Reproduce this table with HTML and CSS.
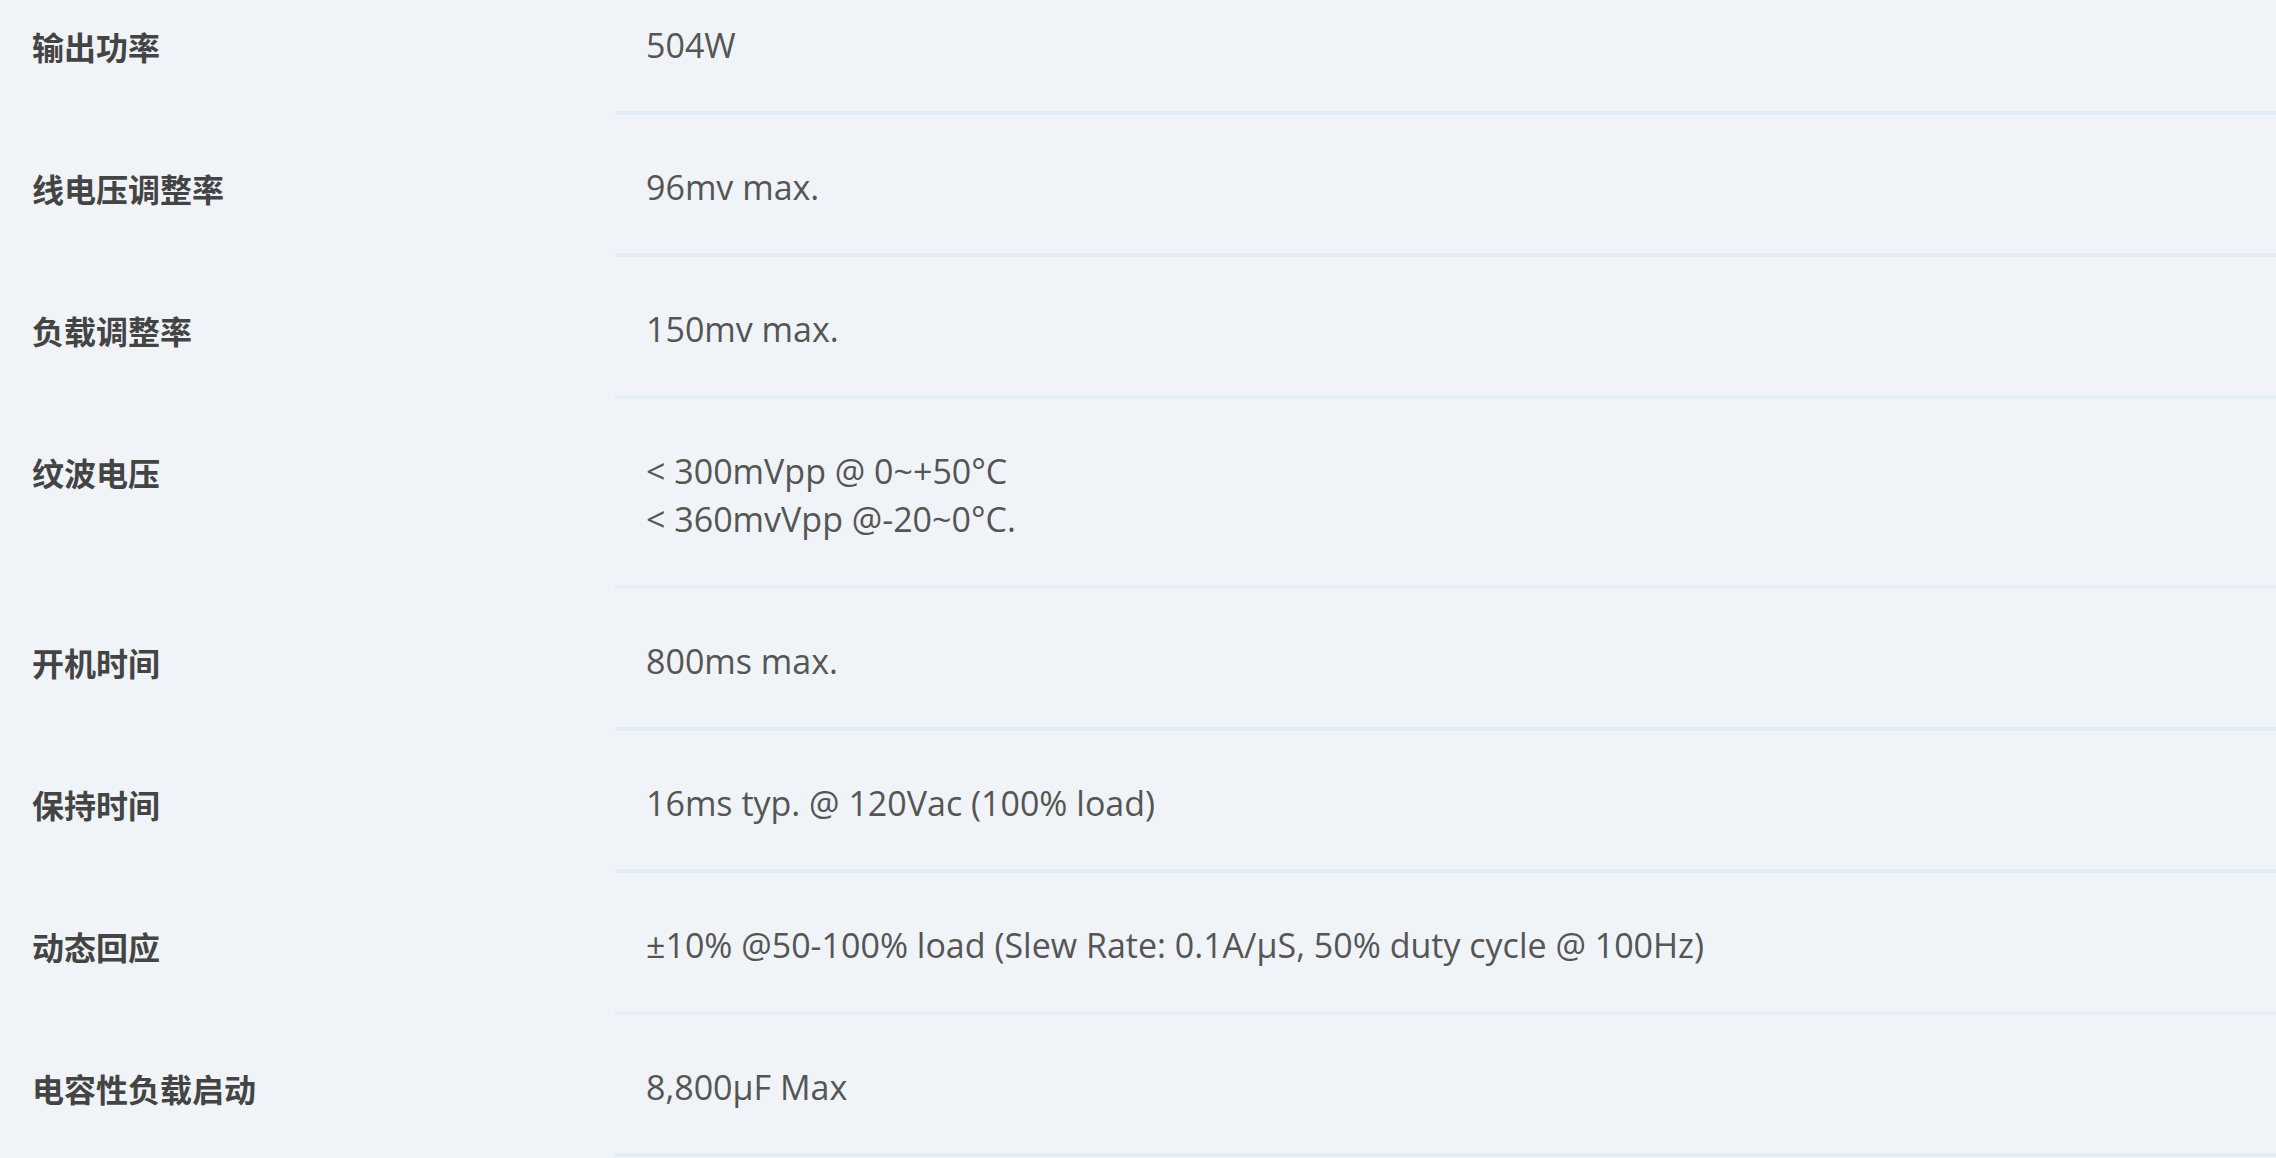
FILE: index.html
```html
<!DOCTYPE html>
<html lang="zh-CN">
<head>
    <meta charset="UTF-8">
    <meta name="viewport" content="width=device-width, initial-scale=1.0">
    <title>规格参数</title>
    <link rel="stylesheet" href="styles.css">
</head>
<body>
    <dl class="spec-list">
        <dt>输出功率</dt>
        <dd>504W</dd>

        <dt>线电压调整率</dt>
        <dd>96mv max.</dd>

        <dt>负载调整率</dt>
        <dd>150mv max.</dd>

        <dt>纹波电压</dt>
        <dd>&lt; 300mVpp @ 0~+50°C<br>&lt; 360mvVpp @-20~0°C.</dd>

        <dt>开机时间</dt>
        <dd>800ms max.</dd>

        <dt>保持时间</dt>
        <dd>16ms typ. @ 120Vac (100% load)</dd>

        <dt>动态回应</dt>
        <dd>±10% @50-100% load (Slew Rate: 0.1A/μS, 50% duty cycle @ 100Hz)</dd>

        <dt>电容性负载启动</dt>
        <dd>8,800μF Max</dd>
    </dl>
</body>
</html>
```

FILE: styles.css
```css
html, body {
    margin: 0;
    background-color: #f0f4f9;
}
body {
    font-family: "Open Sans", "Noto Sans CJK SC", sans-serif;
    font-size: 32px;
    line-height: 48px;
    overflow: hidden;
}
.spec-list {
    display: grid;
    grid-template-columns: 615px 1fr;
    margin: -27px 0 0 0; /* 页面已向下滚动一点 */
}
.spec-list dt {
    padding: 49px 0 0 32px;
    font-family: "Noto Sans CJK SC", sans-serif;
    font-weight: bold;
    color: #444;
}
.spec-list dd {
    margin: 0;
    padding: 48px 31px 42px;
    font-size: 34px;
    color: #555;
    border-bottom: 4px solid #e2edf5;
}
```
